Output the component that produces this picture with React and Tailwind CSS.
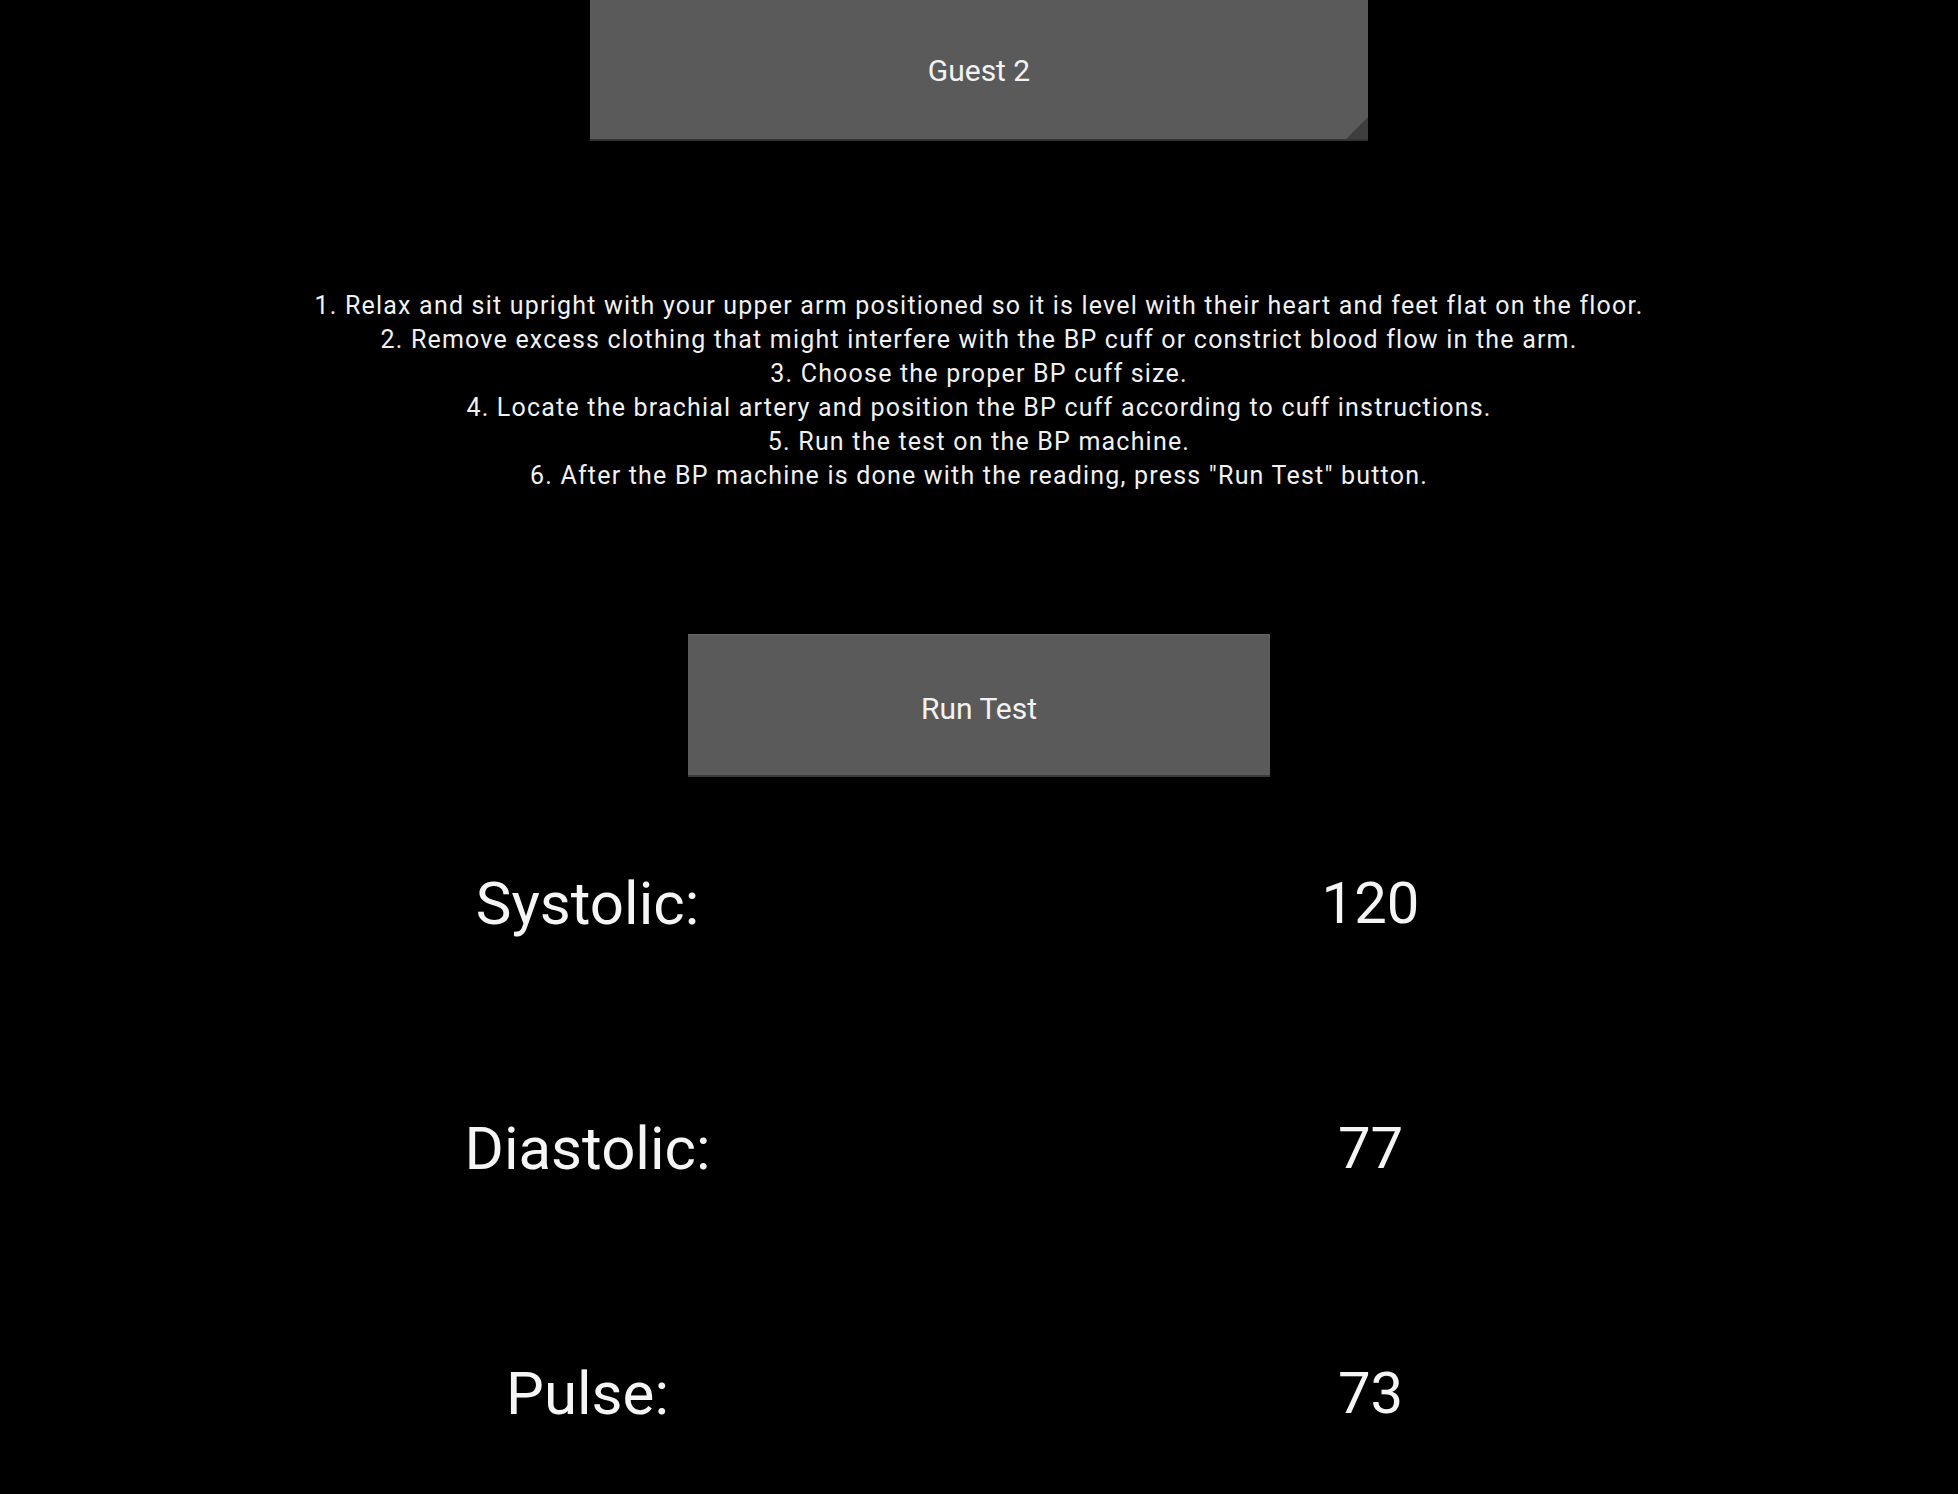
const steps = [
  '1. Relax and sit upright with your upper arm positioned so it is level with their heart and feet flat on the floor.',
  '2. Remove excess clothing that might interfere with the BP cuff or constrict blood flow in the arm.',
  '3. Choose the proper BP cuff size.',
  '4. Locate the brachial artery and position the BP cuff according to cuff instructions.',
  '5. Run the test on the BP machine.',
  '6. After the BP machine is done with the reading, press "Run Test" button.',
];

const readings = [
  { label: 'Systolic:', value: '120' },
  { label: 'Diastolic:', value: '77' },
  { label: 'Pulse:', value: '73' },
];

const GuestSpinner = () => (
  <div className="relative w-[778px] h-[141px] bg-[#5a5a5a] border-b-2 border-[#333333] flex items-center justify-center">
    <span className="text-[30px] text-[#f2f2f2] pt-[2px]">Guest 2</span>
    <svg className="absolute right-0 bottom-0" width="22" height="22" viewBox="0 0 22 22">
      <polygon points="22,0 22,22 0,22" fill="#3e3e3e" />
    </svg>
  </div>
);

const RunTestButton = () => (
  <button className="w-[582px] h-[143px] bg-[#5a5a5a] border-t border-[#666666] border-b-2 border-b-[#3a3a3a] flex items-center justify-center">
    <span className="text-[30px] text-[#f2f2f2] pt-[7px]">Run Test</span>
  </button>
);

export default function App() {
  return (
    <div
      className="w-full min-h-[1494px] bg-black text-white flex flex-col items-center"
      style={{ fontFamily: 'Roboto, "Noto Sans", sans-serif' }}
    >
      <GuestSpinner />

      <div className="mt-[148px] text-center text-[25px] leading-[34px] tracking-[1.2px] text-[#f0f0f0]">
        {steps.map((step) => (
          <p key={step}>{step}</p>
        ))}
      </div>

      <div className="mt-[141px]">
        <RunTestButton />
      </div>

      <div className="mt-[4px] w-[1566px] flex flex-col">
        {readings.map((r) => (
          <div key={r.label} className="grid grid-cols-2 h-[245px] items-center">
            <div className="text-center text-[60px] text-[#f5f5f5]">{r.label}</div>
            <div className="text-center text-[58px] text-[#f5f5f5]">{r.value}</div>
          </div>
        ))}
      </div>
    </div>
  );
}
